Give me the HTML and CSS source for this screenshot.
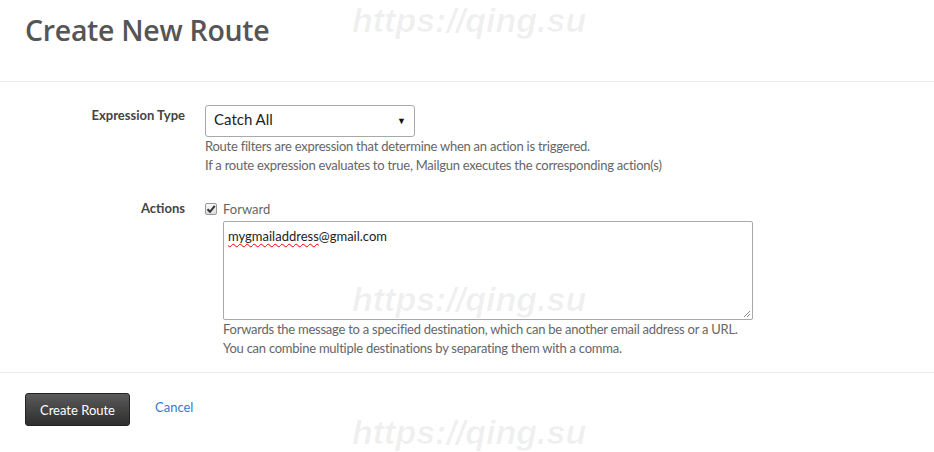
FILE: index.html
```html
<!DOCTYPE html>
<html lang="en">
<head>
  <meta charset="UTF-8" />
  <meta name="viewport" content="width=device-width, initial-scale=1.0"/>
  <title>Create New Route</title>
  <link rel="stylesheet" href="styles.css">
</head>
<body>
  <div class="page-header">
    <h1 class="page-title">Create New Route</h1>
  </div>

  <form class="route-form">
    <div class="form-row">
      <label class="form-label">Expression Type</label>
      <div class="form-control">
        <div class="select-box">
          <span class="select-value">Catch All</span>
          <span class="select-arrow">&#9660;</span>
        </div>
        <p class="help-text">Route filters are expression that determine when an action is triggered.<br>If a route expression evaluates to true, Mailgun executes the corresponding action(s)</p>
      </div>
    </div>

    <div class="form-row actions-row">
      <label class="form-label">Actions</label>
      <div class="form-control">
        <div class="check-line">
          <span class="check-box">
            <svg width="10" height="10" viewBox="0 0 10 10"><path d="M1.5 5.2 L4 7.8 L8.8 1.8" fill="none" stroke="#333" stroke-width="2"/></svg>
          </span>
          <span class="check-label">Forward</span>
        </div>
        <div class="nested">
          <div class="text-area">
            <span class="misspelled">mygmailaddress</span>@gmail.com
            <svg class="resize-grip" width="9" height="9" viewBox="0 0 9 9"><path d="M8 2 L2 8 M8 5 L5 8" stroke="#888" stroke-width="1"/></svg>
          </div>
          <p class="help-text">Forwards the message to a specified destination, which can be another email address or a URL.<br>You can combine multiple destinations by separating them with a comma.</p>
        </div>
      </div>
    </div>

    <div class="form-footer">
      <button type="button" class="btn-dark">Create Route</button>
      <a href="#" class="cancel-link">Cancel</a>
    </div>
  </form>

  <div class="watermark wm-top">https://qing.su</div>
  <div class="watermark wm-mid">https://qing.su</div>
  <div class="watermark wm-bottom">https://qing.su</div>
</body>
</html>
```

FILE: styles.css
```css
* {
  margin: 0;
  padding: 0;
  box-sizing: border-box;
}

html, body {
  width: 100%;
  height: 100%;
  overflow: hidden;
  background-color: white;
  font-family: Lato, "Open Sans", sans-serif;
  font-size: 13px;
  color: #555;
}

.page-header {
  height: 82px;
  padding: 11px 25px 0;
  border-bottom: 1px solid #ebebeb;
}

.page-title {
  font-family: "Open Sans", sans-serif;
  font-size: 28.5px;
  font-weight: 600;
  color: #555;
  letter-spacing: -0.3px;
}

.route-form {
  padding-top: 23px;
}

.form-row {
  display: grid;
  grid-template-columns: 185px 1fr;
  column-gap: 20px;
}

.actions-row {
  margin-top: 24px;
}

.form-label {
  text-align: right;
  font-weight: bold;
  color: #444;
  padding-top: 1px;
  line-height: 19px;
}

.actions-row .form-label {
  padding-top: 0;
}

.select-box {
  width: 210px;
  height: 32px;
  border: 1px solid #a9a9a9;
  border-radius: 3px;
  display: flex;
  align-items: center;
  justify-content: space-between;
  padding: 0 8px 4px 8px;
  color: #222;
}

.select-value {
  font-size: 15px;
}

.select-arrow {
  font-size: 9px;
  color: #111;
  margin-top: 2px;
}

.help-text {
  line-height: 19px;
  color: #666;
  letter-spacing: -0.25px;
}

.check-line {
  display: flex;
  align-items: center;
  height: 19px;
}

.check-box {
  width: 12px;
  height: 12px;
  border: 1px solid #999;
  border-radius: 2px;
  background: linear-gradient(#fafafa, #ddd);
  display: flex;
  align-items: center;
  justify-content: center;
  margin-right: 6px;
}

.check-label {
  color: #666;
}

.nested {
  padding-left: 18px;
  padding-top: 3px;
}

.text-area {
  position: relative;
  width: 530px;
  height: 99px;
  border: 1px solid #a9a9a9;
  border-radius: 2px;
  padding: 6px 4px;
  color: #222;
}

.misspelled {
  text-decoration: underline wavy #e00;
  text-decoration-thickness: 1px;
  text-underline-offset: 2px;
}

.resize-grip {
  position: absolute;
  right: 1px;
  bottom: 1px;
}

.form-footer {
  margin-top: 14px;
  border-top: 1px solid #ebebeb;
  padding: 20px 25px;
  display: flex;
  align-items: center;
  gap: 25px;
}

.btn-dark {
  width: 105px;
  height: 33px;
  border: 1px solid #222;
  border-radius: 3px;
  background: linear-gradient(#5a5a5a, #2e2e2e);
  color: white;
  font-family: inherit;
  font-size: 13px;
}

.cancel-link {
  color: #3b78c9;
  text-decoration: none;
  margin-bottom: 6px;
}

.watermark {
  position: absolute;
  left: 352px;
  font-family: "Liberation Sans", Arial, sans-serif;
  font-weight: bold;
  font-style: italic;
  font-size: 34px;
  line-height: 40px;
  color: rgba(0, 0, 0, 0.06);
  pointer-events: none;
}

.wm-top {
  top: 0;
}

.wm-mid {
  top: 279px;
}

.wm-bottom {
  top: 412px;
}
```
